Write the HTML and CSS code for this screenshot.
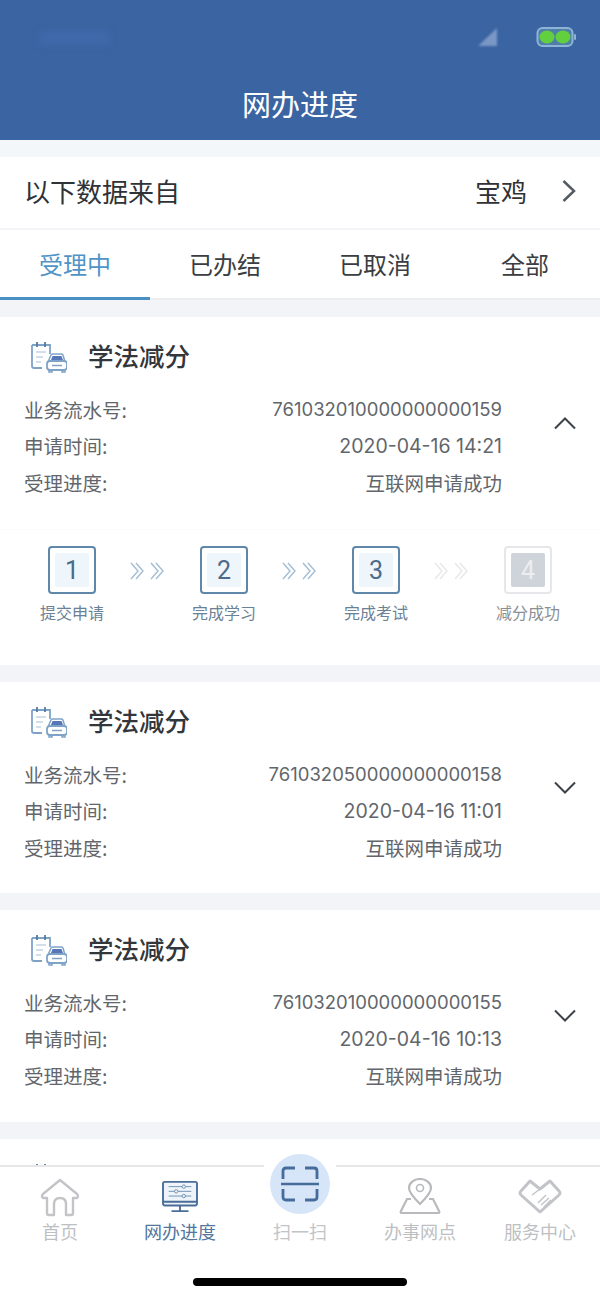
FILE: index.html
```html
<!DOCTYPE html>
<html lang="zh-CN">
<head>
<meta charset="utf-8">
<title>网办进度</title>
<link rel="stylesheet" href="styles.css">
</head>
<body>
<div class="page">
  <header class="header">
    <div class="status">
      <span class="status-time"></span>
      <svg class="status-signal" width="22" height="20" viewBox="0 0 22 20"><path d="M1 19 L20 1 V19 Z" fill="#7a97c6"/></svg>
      <svg class="status-battery" width="42" height="22" viewBox="0 0 42 22">
        <rect x="1.500" y="2" width="35" height="18" rx="5" fill="#4f7fa8" stroke="#8db4d6" stroke-width="2"/>
        <ellipse cx="11" cy="11" rx="7.500" ry="6.500" fill="#62cf3f"/>
        <ellipse cx="27" cy="11" rx="7.500" ry="6.500" fill="#62cf3f"/>
        <rect x="38" y="8" width="2" height="6" rx="1" fill="#8db4d6"/>
      </svg>
    </div>
    <h1 class="header-title">网办进度</h1>
  </header>

  <div class="source">
    <span class="source-label">以下数据来自</span>
    <span class="source-city">宝鸡</span>
    <svg class="source-arrow" width="16" height="24" viewBox="0 0 16 24"><path d="M2.500 2 L13 12 L2.500 22" fill="none" stroke="#555b62" stroke-width="2.500"/></svg>
  </div>

  <nav class="tabs">
    <a class="tab tab-active">受理中</a>
    <a class="tab">已办结</a>
    <a class="tab">已取消</a>
    <a class="tab">全部</a>
  </nav>

  <section class="card">
    <div class="card-head">
      <svg class="card-icon" width="38" height="32" viewBox="0 0 38 32">
        <path d="M3 4 H21 V13 M13 27 H5 Q3 27 3 25 V4" fill="none" stroke="#7fa3c7" stroke-width="1.800"/>
        <path d="M8 1 V6 M16 1 V6" stroke="#567ba1" stroke-width="1.800"/>
        <path d="M7 11 H17 M7 16 H14 M7 21 H12" stroke="#c4d4e3" stroke-width="1.500"/>
        <path d="M19 21 L22 14 Q22.500 13 24 13 H32 Q33.500 13 34 14 L36 21" fill="#fff" stroke="#7fa3c7" stroke-width="1.500"/>
        <path d="M22 19 L23.500 15 H32.500 L34 19 Z" fill="#5577b8"/>
        <rect x="18" y="20" width="20" height="9" rx="3" fill="#fff" stroke="#7fa3c7" stroke-width="1.800"/>
        <path d="M20 29 V31 H23 V29 M33 29 V31 H36 V29 M23 24.500 H33" fill="none" stroke="#7fa3c7" stroke-width="1.500"/>
      </svg>
      <h2 class="card-title">学法减分</h2>
    </div>
    <div class="card-body">
      <dl class="fields">
        <div class="field"><dt>业务流水号:</dt><dd class="serial">761032010000000000159</dd></div>
        <div class="field"><dt>申请时间:</dt><dd>2020-04-16 14:21</dd></div>
        <div class="field"><dt>受理进度:</dt><dd>互联网申请成功</dd></div>
      </dl>
      <svg class="chevron" width="24" height="14" viewBox="0 0 24 14"><path d="M2 12.500 L12 2.500 L22 12.500" fill="none" stroke="#3d4248" stroke-width="2"/></svg>
    </div>
    <div class="steps">
      <div class="step">
        <div class="step-box"><span class="step-num">1</span></div>
        <div class="step-label">提交申请</div>
      </div>
      <svg class="step-arrows" width="36" height="18" viewBox="0 0 36 18"><path d="M1 1 L8 9 L1 17 M6 1 L13 9 L6 17 M21 1 L28 9 L21 17 M26 1 L33 9 L26 17" fill="none" stroke="#a3bdd3" stroke-width="1.400"/></svg>
      <div class="step">
        <div class="step-box"><span class="step-num">2</span></div>
        <div class="step-label">完成学习</div>
      </div>
      <svg class="step-arrows" width="36" height="18" viewBox="0 0 36 18"><path d="M1 1 L8 9 L1 17 M6 1 L13 9 L6 17 M21 1 L28 9 L21 17 M26 1 L33 9 L26 17" fill="none" stroke="#a3bdd3" stroke-width="1.400"/></svg>
      <div class="step">
        <div class="step-box"><span class="step-num">3</span></div>
        <div class="step-label">完成考试</div>
      </div>
      <svg class="step-arrows" width="36" height="18" viewBox="0 0 36 18"><path d="M1 1 L8 9 L1 17 M6 1 L13 9 L6 17 M21 1 L28 9 L21 17 M26 1 L33 9 L26 17" fill="none" stroke="#e6e8ea" stroke-width="1.400"/></svg>
      <div class="step step-off">
        <div class="step-box"><span class="step-num">4</span></div>
        <div class="step-label">减分成功</div>
      </div>
    </div>
  </section>

  <section class="card">
    <div class="card-head">
      <svg class="card-icon" width="38" height="32" viewBox="0 0 38 32">
        <path d="M3 4 H21 V13 M13 27 H5 Q3 27 3 25 V4" fill="none" stroke="#7fa3c7" stroke-width="1.800"/>
        <path d="M8 1 V6 M16 1 V6" stroke="#567ba1" stroke-width="1.800"/>
        <path d="M7 11 H17 M7 16 H14 M7 21 H12" stroke="#c4d4e3" stroke-width="1.500"/>
        <path d="M19 21 L22 14 Q22.500 13 24 13 H32 Q33.500 13 34 14 L36 21" fill="#fff" stroke="#7fa3c7" stroke-width="1.500"/>
        <path d="M22 19 L23.500 15 H32.500 L34 19 Z" fill="#5577b8"/>
        <rect x="18" y="20" width="20" height="9" rx="3" fill="#fff" stroke="#7fa3c7" stroke-width="1.800"/>
        <path d="M20 29 V31 H23 V29 M33 29 V31 H36 V29 M23 24.500 H33" fill="none" stroke="#7fa3c7" stroke-width="1.500"/>
      </svg>
      <h2 class="card-title">学法减分</h2>
    </div>
    <div class="card-body card-body-closed">
      <dl class="fields">
        <div class="field"><dt>业务流水号:</dt><dd class="serial">761032050000000000158</dd></div>
        <div class="field"><dt>申请时间:</dt><dd>2020-04-16 11:01</dd></div>
        <div class="field"><dt>受理进度:</dt><dd>互联网申请成功</dd></div>
      </dl>
      <svg class="chevron" width="24" height="14" viewBox="0 0 24 14"><path d="M2 1.500 L12 11.500 L22 1.500" fill="none" stroke="#3d4248" stroke-width="2"/></svg>
    </div>
  </section>

  <section class="card">
    <div class="card-head">
      <svg class="card-icon" width="38" height="32" viewBox="0 0 38 32">
        <path d="M3 4 H21 V13 M13 27 H5 Q3 27 3 25 V4" fill="none" stroke="#7fa3c7" stroke-width="1.800"/>
        <path d="M8 1 V6 M16 1 V6" stroke="#567ba1" stroke-width="1.800"/>
        <path d="M7 11 H17 M7 16 H14 M7 21 H12" stroke="#c4d4e3" stroke-width="1.500"/>
        <path d="M19 21 L22 14 Q22.500 13 24 13 H32 Q33.500 13 34 14 L36 21" fill="#fff" stroke="#7fa3c7" stroke-width="1.500"/>
        <path d="M22 19 L23.500 15 H32.500 L34 19 Z" fill="#5577b8"/>
        <rect x="18" y="20" width="20" height="9" rx="3" fill="#fff" stroke="#7fa3c7" stroke-width="1.800"/>
        <path d="M20 29 V31 H23 V29 M33 29 V31 H36 V29 M23 24.500 H33" fill="none" stroke="#7fa3c7" stroke-width="1.500"/>
      </svg>
      <h2 class="card-title">学法减分</h2>
    </div>
    <div class="card-body card-body-closed card-body-last">
      <dl class="fields">
        <div class="field"><dt>业务流水号:</dt><dd class="serial">761032010000000000155</dd></div>
        <div class="field"><dt>申请时间:</dt><dd>2020-04-16 10:13</dd></div>
        <div class="field"><dt>受理进度:</dt><dd>互联网申请成功</dd></div>
      </dl>
      <svg class="chevron" width="24" height="14" viewBox="0 0 24 14"><path d="M2 1.500 L12 11.500 L22 1.500" fill="none" stroke="#3d4248" stroke-width="2"/></svg>
    </div>
  </section>

  <section class="card">
    <div class="card-head">
      <svg class="card-icon" width="38" height="32" viewBox="0 0 38 32">
        <path d="M8 1 V6 M16 1 V6" stroke="#567ba1" stroke-width="1.800"/>
      </svg>
    </div>
  </section>

  <footer class="tabbar">
    <div class="scan-ring">
      <div class="scan">
        <svg width="38" height="36" viewBox="0 0 38 36"><path d="M14 2 H5 Q2 2 2 5 V13 M24 2 H33 Q36 2 36 5 V13 M14 34 H5 Q2 34 2 31 V23 M24 34 H33 Q36 34 36 31 V23" fill="none" stroke="#466c9c" stroke-width="2.800"/><path d="M0 18 H38" stroke="#466c9c" stroke-width="2.400"/></svg>
      </div>
    </div>
    <a class="nav-item">
      <svg class="nav-icon" width="40" height="40" viewBox="0 0 40 40"><path d="M14 37 H9 Q7 37 7 35 V20 L3 20 Q1 18 3 16 L20 2 L37 16 Q39 18 37 20 L33 20 V35 Q33 37 31 37 H26 V26 Q26 20 20 20 Q14 20 14 26 Z" fill="none" stroke="#c2c4c7" stroke-width="2.400" stroke-linejoin="round"/></svg>
      <span>首页</span>
    </a>
    <a class="nav-item nav-item-active">
      <svg class="nav-icon" width="38" height="34" viewBox="0 0 40 36"><rect x="2" y="2" width="36" height="25" rx="2" fill="#eef4fa" stroke="#4a6e98" stroke-width="2"/><path d="M2 23 H38 M20 27 V32 M11 33 H29" stroke="#4a6e98" stroke-width="2"/><path d="M8 7 H32 M8 12 H32 M8 17 H32" stroke="#6f8fae" stroke-width="1"/><circle cx="24" cy="7" r="1.800" fill="#eef4fa" stroke="#6f8fae"/><circle cx="16" cy="12" r="1.800" fill="#eef4fa" stroke="#6f8fae"/><circle cx="24" cy="17" r="1.800" fill="#eef4fa" stroke="#6f8fae"/></svg>
      <span>网办进度</span>
    </a>
    <a class="nav-item nav-item-scan">
      <span>扫一扫</span>
    </a>
    <a class="nav-item">
      <svg class="nav-icon" width="42" height="36" viewBox="0 0 42 36"><path d="M21 26 Q10 15 10 10 A11 9 0 0 1 32 10 Q32 15 21 26 Z" fill="#fff" stroke="#b8babd" stroke-width="2.200"/><circle cx="21" cy="10" r="3.500" fill="none" stroke="#b8babd" stroke-width="1.600"/><path d="M12 21 H8 L2 33 Q1 35 3 35 H39 Q41 35 40 33 L34 21 H30" fill="none" stroke="#b8babd" stroke-width="2.200"/></svg>
      <span>办事网点</span>
    </a>
    <a class="nav-item">
      <svg class="nav-icon" width="44" height="36" viewBox="0 0 44 36"><path d="M22 34 L3 17 Q1 15 3 13 L12 3 L22 11 L32 3 L41 13 Q43 15 41 17 Z" fill="none" stroke="#c2c4c7" stroke-width="3" stroke-linejoin="round"/><path d="M14 17 L22 11 M23 27 L31 20 M26 29 L33 22 M20 25 L28 17" stroke="#c2c4c7" stroke-width="1.500"/></svg>
      <span>服务中心</span>
    </a>
    <div class="home-bar"></div>
  </footer>
</div>
</body>
</html>
```
FILE: styles.css
```css
* { box-sizing: border-box; }
html, body { margin: 0; padding: 0; background: #f3f4f8; }
body { font-family: "Noto Sans CJK SC", "Noto Sans", sans-serif; color: #333; }
.page { position: relative; width: 600px; height: 1299px; overflow: hidden; background: #f3f4f8; }

.header { height: 140px; background: #3a64a2; display: flex; flex-direction: column; }
.status { height: 82px; display: flex; align-items: flex-start; padding: 26px 22px 0 40px; }
.status-time { width: 70px; height: 14px; margin-top: 5px; background: #3f69aa; filter: blur(3px); }
.status-signal { margin-left: auto; margin-right: 37px; margin-top: 1px; filter: blur(0.8px); }
.status-battery { filter: blur(0.7px); }
.header-title { margin: 0; text-align: center; font-size: 29px; line-height: 42px; font-weight: 400; color: #fff; }

.source { height: 88px; border-top: 17px solid #f3f7f9; background: #fff; display: flex; align-items: center; padding: 0 23px 0 24px; }
.source-label { font-size: 26px; color: #2f3236; flex: 1; margin-bottom: 5px; }
.source-city { font-size: 26px; color: #2f3236; margin-right: 34px; margin-bottom: 5px; }
.source-arrow { margin-bottom: 4px; }

.tabs { margin-top: 2px; height: 70px; background: #fff; display: grid; grid-template-columns: repeat(4, 150px); }
.tab { display: flex; align-items: center; justify-content: center; font-size: 24px; color: #3a3d41; height: 70px; padding-bottom: 4px; box-shadow: inset 0 -2px 0 #eceef0; }
.tab-active { color: #4f94c7; box-shadow: inset 0 -3px 0 #4a8fc4; }

.card { margin-top: 17px; background: #fff; }
.card-head { display: flex; align-items: center; height: 80px; padding-left: 29px; }
.card-title { margin: 0 0 4px 21px; font-size: 25.500px; line-height: 36px; font-weight: 500; color: #33363a; }
.card-icon { flex: none; }
.card-body { display: flex; align-items: flex-start; padding: 0 23px 0 24px; height: 132px; }
.card-body-closed { height: 131px; }
.card-body-last { height: 132px; }
.fields { margin: -6px 0 0; flex: 1; font-size: 19.500px; color: #62666b; }
.field { display: flex; justify-content: space-between; height: 36.500px; align-items: center; }
.field dt { margin: 0; }
.field dd { margin: 0; font-family: "Inter", "Noto Sans CJK SC", sans-serif; font-size: 19.500px; }
.field .serial { font-size: 18.500px; }
.chevron { flex: none; margin: 19px 0 0 51px; }

.steps { display: flex; justify-content: space-between; padding: 16px 32px 0; height: 136px; border-top: 1px solid #fafbfc; }
.step { width: 80px; display: flex; flex-direction: column; align-items: center; }
.step-box { width: 48px; height: 48px; border: 2px solid #5f87aa; border-radius: 4px; padding: 5px; background: #fff; }
.step-num { display: flex; width: 100%; height: 100%; align-items: center; justify-content: center; background: #eef5fb; border-radius: 2px; font-family: "Roboto", sans-serif; font-size: 25px; color: #4a6b8a; }
.step-label { margin-top: 7px; font-size: 16px; line-height: 22px; color: #6b8296; white-space: nowrap; }
.step-off .step-box { border-color: #e5e7ea; }
.step-off .step-num { background: #cfd3da; color: #eceef0; }
.step-off .step-label { color: #8a8f94; }
.step-arrows { margin-top: 16px; flex: none; width: 36px; height: 18px; margin-left: 18px; margin-right: 18px; }

.tabbar { position: absolute; left: 0; right: 0; top: 1165px; height: 134px; background: #fff; border-top: 2px solid #e6e6e9; display: grid; grid-template-columns: repeat(5, 120px); }
.scan-ring { position: absolute; left: 264px; top: -14px; width: 72px; height: 66px; background: #fff; border-radius: 0 0 36px 36px; display: flex; justify-content: center; }
.scan { width: 60px; height: 60px; margin-top: 1px; border-radius: 50%; background: #d6e6f8; display: flex; align-items: center; justify-content: center; }
.nav-item { position: relative; display: flex; flex-direction: column; align-items: center; height: 84px; padding-top: 11px; font-size: 18px; color: #bdbfc2; }
.nav-item span { position: absolute; top: 51px; line-height: 26px; white-space: nowrap; }
.nav-item-active { color: #52769c; padding-top: 13px; }
.nav-item-scan { color: #c2c4c7; }
.home-bar { position: absolute; left: 193px; top: 111px; width: 214px; height: 8px; border-radius: 4px; background: #000; }
```
